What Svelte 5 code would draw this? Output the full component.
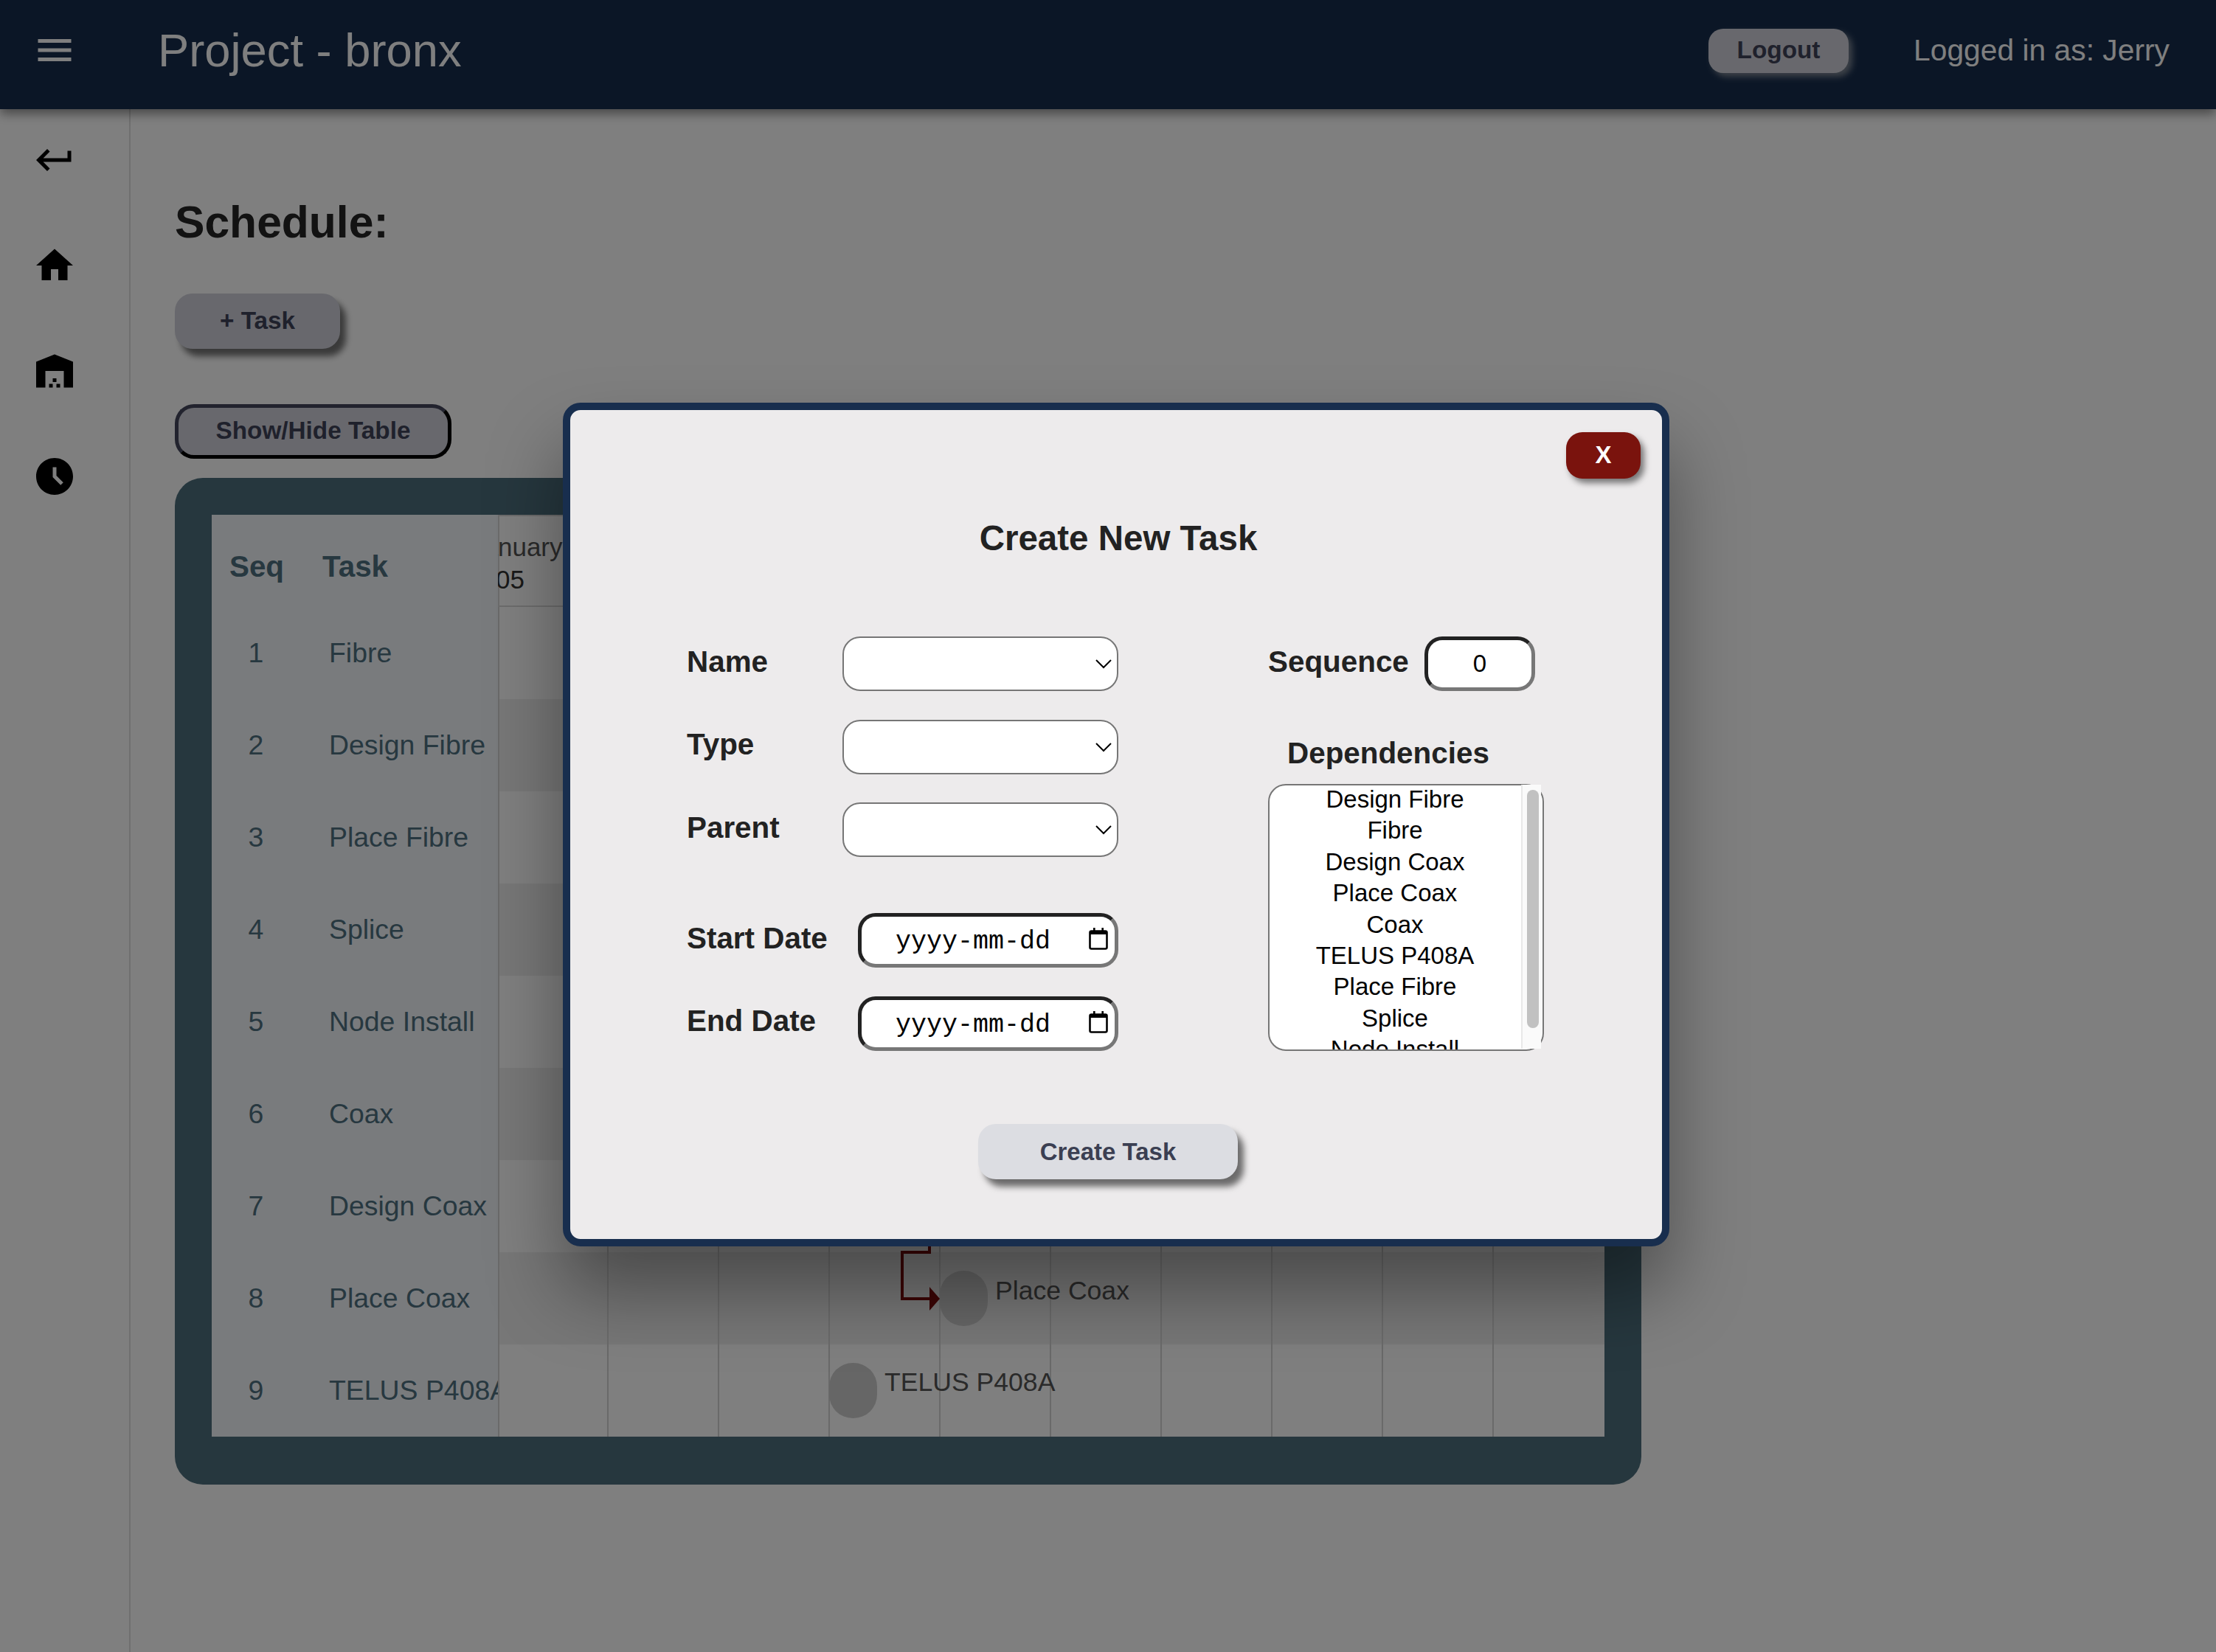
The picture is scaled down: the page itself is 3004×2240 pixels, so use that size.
<script lang="ts">
	const TASKS = [
		'Fibre',
		'Design Fibre',
		'Place Fibre',
		'Splice',
		'Node Install',
		'Coax',
		'Design Coax',
		'Place Coax',
		'TELUS P408A'
	];
	const DEPENDENCIES = [
		'Design Fibre',
		'Fibre',
		'Design Coax',
		'Place Coax',
		'Coax',
		'TELUS P408A',
		'Place Fibre',
		'Splice',
		'Node Install'
	];
	const SELECTS = ['Name', 'Type', 'Parent'];
	const DATES = ['Start Date', 'End Date'];
	const COLUMNS = Array.from({ length: 10 }, (_, i) => i);
</script>

<div class="page">
	<header class="topbar">
		<svg class="icon menu" viewBox="0 0 24 24"><path d="M3 18h18v-2H3v2zm0-5h18v-2H3v2zm0-7v2h18V6H3z" /></svg>
		<div class="title">Project - bronx</div>
		<button type="button" class="btn logout">Logout</button>
		<div class="user">Logged in as: Jerry</div>
	</header>

	<div class="body">
		<aside class="sidebar">
			<svg class="icon" viewBox="0 0 24 24"><path d="M19 7v4H5.83l3.58-3.59L8 6l-6 6 6 6 1.41-1.41L5.83 13H21V7z" /></svg>
			<svg class="icon" viewBox="0 0 24 24"><path d="M10 20v-6h4v6h5v-8h3L12 3 2 12h3v8z" /></svg>
			<svg class="icon" viewBox="0 0 24 24"><path d="M22 21V7L12 3 2 7v14h5v-9h10v9h5zm-11-2H9v2h2v-2zm2-3h-2v2h2v-2zm2 3h-2v2h2v-2z" /></svg>
			<svg class="icon" viewBox="0 0 24 24"><path d="M11.99 2C6.47 2 2 6.48 2 12s4.47 10 9.99 10C17.52 22 22 17.52 22 12S17.52 2 11.99 2zm3.3 14.71L11 12.41V7h2v4.59l3.71 3.71-1.42 1.41z" /></svg>
		</aside>

		<main class="content">
			<h1>Schedule:</h1>
			<button type="button" class="btn add">+ Task</button>
			<button type="button" class="btn toggle">Show/Hide Table</button>

			<section class="panel">
				<div class="table">
					<div class="tasks">
						<div class="thead">
							<span class="seq head">Seq</span>
							<span class="name head">Task</span>
						</div>
						{#each TASKS as task, i (task)}
							<div class="trow">
								<span class="seq">{i + 1}</span>
								<span class="name">{task}</span>
							</div>
						{/each}
					</div>

					<div class="chart">
						<div class="chart-head">
							<div class="month">January</div>
							<div class="day">05</div>
						</div>
						{#each TASKS as task, r (task)}
							<div class="chart-row" class:alt={r % 2 === 1}>
								{#each COLUMNS as c (c)}
									<div class="cell"></div>
								{/each}
							</div>
						{/each}

						<svg class="links" width="1499" height="1249">
							<path d="M585 800 V1000 H548 V1063 H586" fill="none" stroke="#7a0a0a" stroke-width="4" />
							<path d="M585 1047 L599 1063 L585 1079 Z" fill="#7a0a0a" />
						</svg>
						<div class="node place-coax"></div>
						<div class="node-label place-coax-label">Place Coax</div>
						<div class="node telus"></div>
						<div class="node-label telus-label">TELUS P408A</div>
					</div>
				</div>
			</section>
		</main>
	</div>

	<div class="overlay"></div>

	<div class="modal">
		<button type="button" class="close">X</button>
		<h2>Create New Task</h2>

		<div class="form">
			<div class="left">
				{#each SELECTS as label (label)}
					<div class="row">
						<span class="label">{label}</span>
						<div class="select-wrap">
							<select></select>
							<svg class="chevron" width="22" height="13" viewBox="0 0 22 13"><path d="M1 1l10 10L21 1" fill="none" stroke="#000" stroke-width="2" /></svg>
						</div>
					</div>
				{/each}
				{#each DATES as label, i (label)}
					<div class="row" class:first-date={i === 0}>
						<span class="label">{label}</span>
						<div class="date">
							<input type="text" value="yyyy-mm-dd" />
							<svg class="calendar" width="26" height="30" viewBox="0 0 26 30">
								<rect x="1.5" y="4.5" width="23" height="24" rx="2" fill="none" stroke="#000" stroke-width="2.6" />
								<rect x="1.5" y="4.5" width="23" height="4.5" fill="#000" />
								<rect x="6" y="0" width="2.6" height="5" fill="#000" />
								<rect x="17.4" y="0" width="2.6" height="5" fill="#000" />
							</svg>
						</div>
					</div>
				{/each}
			</div>

			<div class="right">
				<div class="sequence">
					<span class="label">Sequence</span>
					<input class="seq-input" type="text" value="0" />
				</div>
				<div class="label dep-label">Dependencies</div>
				<div class="deps">
					<div class="options">
						{#each DEPENDENCIES as dep (dep)}
							<div class="option">{dep}</div>
						{/each}
					</div>
					<div class="track"><div class="thumb"></div></div>
				</div>
			</div>
		</div>

		<button type="button" class="create">Create Task</button>
	</div>
</div>

<style>
	:global(body) {
		margin: 0;
		background: #fff;
	}

	.page {
		position: relative;
		width: 3004px;
		height: 2240px;
		overflow: hidden;
		font-family: 'Liberation Sans', Arial, sans-serif;
		color: #333;
	}

	.icon {
		display: block;
		width: 60px;
		height: 60px;
		flex: none;
	}

	.topbar {
		position: relative;
		z-index: 1;
		display: flex;
		align-items: center;
		height: 148px;
		box-sizing: border-box;
		padding: 0 63px 12px 44px;
		background: #172d4d;
		color: #fff;
		box-shadow: 0 6px 14px rgba(0, 0, 0, 0.45);
	}
	.menu {
		fill: #fff;
		margin-top: -1px;
	}
	.title {
		margin-left: 110px;
		font-size: 63.3px;
	}
	.user {
		margin-left: 88px;
		font-size: 40.8px;
	}

	.btn {
		display: block;
		box-sizing: border-box;
		border: 0;
		padding: 0 0 2px;
		background: #d0d1da;
		color: #3f4258;
		font-family: inherit;
		font-size: 33.3px;
		font-weight: 700;
	}
	.logout {
		margin-left: auto;
		width: 190px;
		height: 60px;
		margin-top: 2px;
		border-radius: 20px;
		box-shadow: 5px 5px 9px rgba(190, 190, 190, 0.6);
	}

	.body {
		display: flex;
		height: 2092px;
	}
	.sidebar {
		display: flex;
		flex-direction: column;
		gap: 83px;
		width: 177px;
		box-sizing: border-box;
		padding: 39px 0 0 44px;
		border-right: 2px solid #dedede;
	}

	.content {
		flex: 1;
		padding: 119px 0 0 60px;
	}
	h1 {
		margin: 0;
		font-size: 60.6px;
		line-height: 69px;
		font-weight: 700;
		color: #242424;
	}
	.add {
		width: 224px;
		height: 75px;
		margin-top: 62px;
		border-radius: 24px;
		box-shadow: 8px 10px 9px rgba(0, 0, 0, 0.55);
	}
	.toggle {
		width: 375px;
		height: 74px;
		margin-top: 75px;
		border: 5px solid;
		border-color: #44475c #000 #000 #44475c;
		border-radius: 26px;
	}

	.panel {
		width: 1988px;
		height: 1365px;
		box-sizing: border-box;
		margin-top: 26px;
		padding: 50px 50px 65px 50px;
		background: #4c6e7c;
		border-radius: 38px;
	}
	.table {
		display: flex;
		height: 100%;
	}

	.tasks {
		width: 388px;
		flex: none;
		background: #f3f6fa;
		color: #4e7080;
		overflow: hidden;
	}
	.thead,
	.trow {
		display: grid;
		grid-template-columns: 120px 268px;
		align-items: center;
	}
	.thead {
		height: 125px;
		box-sizing: border-box;
		padding-top: 16px;
		font-size: 40.4px;
		font-weight: 700;
	}
	.trow {
		height: 125px;
		font-size: 37.4px;
	}
	.seq {
		text-align: center;
	}
	.seq.head {
		padding-left: 2px;
	}
	.name {
		padding-left: 39px;
		white-space: nowrap;
		overflow: hidden;
	}
	.name.head {
		padding-left: 30px;
	}

	.chart {
		position: relative;
		flex: 1;
		overflow: hidden;
		background: #fff;
		color: #555;
	}
	.chart-head {
		height: 125px;
		box-sizing: border-box;
		padding-top: 20px;
		border-top: 2px solid #d8d8d8;
		border-left: 2px solid #d8d8d8;
		border-bottom: 2px solid #d8d8d8;
		font-size: 35px;
		line-height: 44px;
	}
	.month {
		margin-left: -39px;
	}
	.day {
		margin-left: -5px;
		color: #333;
	}
	.chart-row {
		display: grid;
		grid-template-columns: 148px repeat(9, 150px);
		height: 125px;
	}
	.chart-row.alt {
		background: #efefef;
	}
	.cell {
		border-left: 2px solid #d4d4d4;
	}

	.links {
		position: absolute;
		left: 0;
		top: 0;
	}
	.node {
		position: absolute;
		width: 65px;
		height: 75px;
		border-radius: 32px;
		background: #cdcdcd;
	}
	.place-coax {
		left: 599px;
		top: 1025px;
	}
	.telus {
		left: 449px;
		top: 1150px;
	}
	.node-label {
		position: absolute;
		font-size: 35.6px;
		line-height: 40px;
		white-space: nowrap;
		color: #555;
	}
	.place-coax-label {
		left: 674px;
		top: 1032px;
	}
	.telus-label {
		left: 524px;
		top: 1156px;
	}

	.overlay {
		position: absolute;
		inset: 0;
		z-index: 2;
		background: rgba(0, 0, 0, 0.5);
	}

	.modal {
		position: absolute;
		z-index: 3;
		left: 763px;
		top: 546px;
		width: 1500px;
		height: 1144px;
		box-sizing: border-box;
		border: 10px solid #182e4e;
		border-radius: 24px;
		background: #edebec;
		color: #222;
		box-shadow: 0 60px 100px rgba(0, 0, 0, 0.38);
		padding-top: 146px;
	}
	.close {
		position: absolute;
		top: 30px;
		right: 29px;
		width: 101px;
		height: 63px;
		border: 0;
		padding: 0 0 2px;
		border-radius: 22px;
		background: #7a130d;
		color: #fff;
		font-family: inherit;
		font-size: 33px;
		font-weight: 700;
		box-shadow: 5px 6px 8px rgba(0, 0, 0, 0.5);
	}
	h2 {
		margin: 0;
		padding-left: 6px;
		text-align: center;
		font-size: 47.5px;
		line-height: 56px;
		font-weight: 700;
	}

	.form {
		display: flex;
		gap: 203px;
		margin-top: 105px;
		padding-left: 158px;
	}
	.left {
		display: flex;
		flex-direction: column;
		gap: 38.5px;
		width: 585px;
	}
	.row {
		display: flex;
		justify-content: space-between;
		align-items: center;
	}
	.row.first-date {
		margin-top: 37.5px;
	}
	.label {
		font-size: 40.4px;
		font-weight: 700;
		margin-bottom: 6px;
	}

	.select-wrap {
		position: relative;
		width: 374px;
		height: 74px;
	}
	select {
		appearance: none;
		display: block;
		width: 100%;
		height: 100%;
		box-sizing: border-box;
		background: #fff;
		border: 2px solid #767676;
		border-radius: 24px;
	}
	.chevron {
		position: absolute;
		right: 9px;
		top: 31px;
	}

	.date {
		position: relative;
		width: 353px;
		height: 74px;
		box-sizing: border-box;
		background: #fff;
		border: 5px solid;
		border-color: #222 #777 #777 #222;
		border-radius: 24px;
	}
	.date input {
		display: block;
		width: 100%;
		height: 100%;
		box-sizing: border-box;
		padding: 4px 0 0 46px;
		border: 0;
		background: transparent;
		outline: 0;
		color: #000;
		font-family: 'Liberation Mono', 'Courier New', monospace;
		font-size: 35px;
	}
	.calendar {
		position: absolute;
		right: 9px;
		top: 15px;
	}

	.sequence {
		display: flex;
		align-items: center;
		justify-content: space-between;
		width: 362px;
	}
	.seq-input {
		width: 150px;
		height: 74px;
		box-sizing: border-box;
		border: 5px solid;
		border-color: #222 #777 #777 #222;
		border-radius: 24px;
		background: #fff;
		outline: 0;
		padding: 0;
		text-align: center;
		color: #000;
		font-family: inherit;
		font-size: 33px;
	}
	.dep-label {
		margin: 61px 0 19px 26px;
		line-height: 46px;
	}

	.deps {
		position: relative;
		width: 374px;
		height: 362px;
		box-sizing: border-box;
		border: 2px solid #767676;
		border-radius: 24px;
		background: #fff;
	}
	.options {
		height: 358px;
		overflow: hidden;
		padding-right: 30px;
		text-align: center;
		color: #000;
		font-size: 33px;
	}
	.option {
		height: 42.4px;
		line-height: 42.4px;
		white-space: nowrap;
		position: relative;
		top: -2px;
	}
	.track {
		position: absolute;
		top: -1px;
		right: 2px;
		bottom: 1px;
		width: 25px;
		background: #fafafa;
		border-left: 2px solid #e8e8e8;
	}
	.thumb {
		width: 16px;
		height: 323px;
		margin: 7px 0 0 6px;
		border-radius: 8px;
		background: #c1c1c1;
	}

	.create {
		display: block;
		width: 352px;
		height: 75px;
		margin: 99px 0 0 553px;
		border: 0;
		border-radius: 24px;
		background: #dcdde2;
		color: #3b3f52;
		font-family: inherit;
		font-size: 33px;
		font-weight: 700;
		box-shadow: 8px 10px 9px rgba(0, 0, 0, 0.55);
	}
</style>
